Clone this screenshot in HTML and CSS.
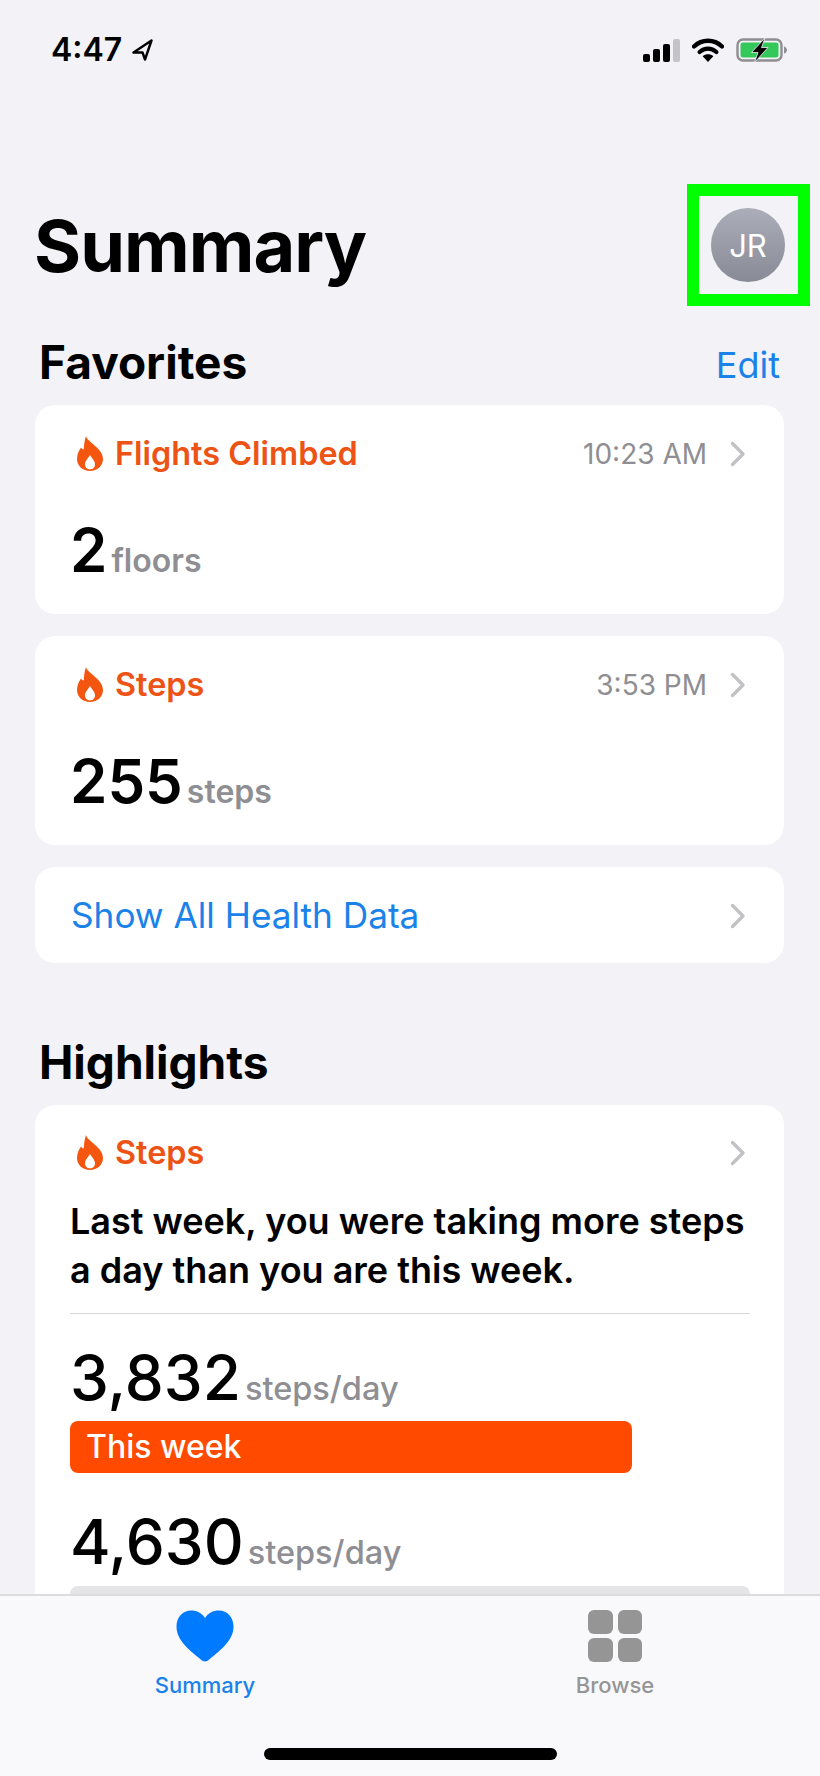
FILE: index.html
```html
<!DOCTYPE html>
<html lang="en">
<head>
  <meta charset="UTF-8" />
  <meta name="viewport" content="width=device-width, initial-scale=1.0"/>
  <title>Summary</title>
  <link rel="stylesheet" href="styles.css">
</head>
<body>

  <div class="phone">

    <!-- Status bar -->
    <div class="status-bar">
      <div class="status-left">
        <span class="clock">4:47</span>
        <svg class="location" viewBox="0 0 22 22"><path d="M20.500 1.500 2.500 13.500h9l2.500 7z" fill="none" stroke="#000" stroke-width="2.400" stroke-linejoin="round"/></svg>
      </div>
      <div class="status-right">
        <svg class="signal" viewBox="0 0 37 23">
          <rect x="0" y="15" width="7" height="8" rx="2" fill="#000"/>
          <rect x="10" y="10" width="7" height="13" rx="2" fill="#000"/>
          <rect x="20" y="5" width="7" height="18" rx="2" fill="#000"/>
          <rect x="30" y="0" width="7" height="23" rx="2" fill="#c4c4c6"/>
        </svg>
        <svg class="wifi" viewBox="0 0 32 24">
          <path d="M2 8.500C10 .8 22 .8 30 8.500" fill="none" stroke="#000" stroke-width="4.400" stroke-linecap="round"/>
          <path d="M7.600 14c5-4.600 11.800-4.600 16.800 0" fill="none" stroke="#000" stroke-width="4.200" stroke-linecap="round"/>
          <path d="M16 24l-5.300-5.700c3-2.600 7.600-2.600 10.600 0z" fill="#000"/>
        </svg>
        <svg class="battery" viewBox="0 0 51 24">
          <rect x="1.500" y="1.500" width="44" height="21" rx="5.500" fill="none" stroke="#8e8e93" stroke-width="2.400"/>
          <rect x="4.500" y="4.500" width="38" height="15" rx="2.500" fill="#34c759"/>
          <path d="M48 8.500c2 .5 3 2 3 3.500s-1 3-3 3.500z" fill="#8e8e93"/>
          <path d="M29 0 15.500 14.500H22L18.500 24.500 32 9.500h-6.500z" fill="#000" stroke="#f2f2f7" stroke-width=".8"/>
        </svg>
      </div>
    </div>

    <!-- Scrolling content -->
    <main class="content">
      <header class="page-header">
        <h1>Summary</h1>
        <div class="avatar-mark">
          <div class="avatar">JR</div>
        </div>
      </header>

      <div class="section-head">
        <h2>Favorites</h2>
        <span class="edit-link">Edit</span>
      </div>

      <section class="card fav-card">
        <div class="card-top">
          <svg class="flame" viewBox="0 0 26 35"><path fill-rule="evenodd" d="M9 0c1 6 17 12 17 23 0 7-5.800 12-13 12S0 30 0 23c0-4.500 1.800-8.500 4-11.500.5 1 1.500 1.800 2.800 2C7 9 7.500 4 9 0zm4 19c-2 3.500-5 6-5 9.300 0 3.200 2.300 5.200 5 5.200s5-2 5-5.200c0-3.300-3-5.800-5-9.300z" fill="#f4550f"/></svg>
          <span class="card-title">Flights Climbed</span>
          <span class="card-time">10:23 AM</span>
          <svg class="chevron" viewBox="0 0 16 26"><path d="M2.500 2.500 13 13 2.500 23.500" fill="none" stroke="#c2c2c6" stroke-width="3.400" stroke-linecap="round" stroke-linejoin="round"/></svg>
        </div>
        <div class="metric">
          <span class="metric-num">2</span><span class="metric-unit">floors</span>
        </div>
      </section>

      <section class="card fav-card">
        <div class="card-top">
          <svg class="flame" viewBox="0 0 26 35"><path fill-rule="evenodd" d="M9 0c1 6 17 12 17 23 0 7-5.800 12-13 12S0 30 0 23c0-4.500 1.800-8.500 4-11.500.5 1 1.500 1.800 2.800 2C7 9 7.500 4 9 0zm4 19c-2 3.500-5 6-5 9.300 0 3.200 2.300 5.200 5 5.200s5-2 5-5.200c0-3.300-3-5.800-5-9.300z" fill="#f4550f"/></svg>
          <span class="card-title">Steps</span>
          <span class="card-time">3:53 PM</span>
          <svg class="chevron" viewBox="0 0 16 26"><path d="M2.500 2.500 13 13 2.500 23.500" fill="none" stroke="#c2c2c6" stroke-width="3.400" stroke-linecap="round" stroke-linejoin="round"/></svg>
        </div>
        <div class="metric">
          <span class="metric-num">255</span><span class="metric-unit">steps</span>
        </div>
      </section>

      <section class="card all-data">
        <span class="all-data-text">Show All Health Data</span>
        <svg class="chevron" viewBox="0 0 16 26"><path d="M2.500 2.500 13 13 2.500 23.500" fill="none" stroke="#c2c2c6" stroke-width="3.400" stroke-linecap="round" stroke-linejoin="round"/></svg>
      </section>

      <h2 class="highlights-title">Highlights</h2>

      <section class="card highlight">
        <div class="card-top highlight-top">
          <svg class="flame" viewBox="0 0 26 35"><path fill-rule="evenodd" d="M9 0c1 6 17 12 17 23 0 7-5.800 12-13 12S0 30 0 23c0-4.500 1.800-8.500 4-11.500.5 1 1.500 1.800 2.800 2C7 9 7.500 4 9 0zm4 19c-2 3.500-5 6-5 9.300 0 3.200 2.300 5.200 5 5.200s5-2 5-5.200c0-3.300-3-5.800-5-9.300z" fill="#f4550f"/></svg>
          <span class="card-title">Steps</span>
          <svg class="chevron" viewBox="0 0 16 26"><path d="M2.500 2.500 13 13 2.500 23.500" fill="none" stroke="#c2c2c6" stroke-width="3.400" stroke-linecap="round" stroke-linejoin="round"/></svg>
        </div>
        <p class="highlight-text">Last week, you were taking more steps a day than you are this week.</p>
        <div class="divider"></div>
        <div class="metric compare">
          <span class="metric-num">3,832</span><span class="metric-unit">steps/day</span>
        </div>
        <div class="bar this-week">This week</div>
        <div class="metric compare second">
          <span class="metric-num">4,630</span><span class="metric-unit">steps/day</span>
        </div>
        <div class="bar last-week"></div>
      </section>
    </main>

    <!-- Tab bar -->
    <nav class="tab-bar">
      <div class="tabs">
        <div class="tab active">
          <svg class="tab-icon" viewBox="0 0 58 52"><path d="M29 51.500c-1.500 0-3-1-4.500-2.300C12 39 .5 30 .5 16.500.5 7 7 .5 15 .5c6 0 11 2.500 14 7.500 3-5 8-7.500 14-7.500 8 0 14.500 6.500 14.500 16 0 13.500-11.500 22.500-24 32.700-1.500 1.300-3 2.300-4.500 2.300z" fill="#007aff"/></svg>
          <span class="tab-label">Summary</span>
        </div>
        <div class="tab">
          <div class="grid-icon">
            <span></span><span></span><span></span><span></span>
          </div>
          <span class="tab-label">Browse</span>
        </div>
      </div>
      <div class="home-bar"></div>
    </nav>

  </div>

</body>
</html>
```

FILE: styles.css
```css
* {
  box-sizing: border-box;
}

body {
  margin: 0;
  background-color: #f2f2f7;
  font-family: 'Inter', 'Liberation Sans', sans-serif;
  color: #000;
}

.phone {
  width: 820px;
  height: 1776px;
  display: flex;
  flex-direction: column;
  overflow: hidden;
}

/* Status bar */
.status-bar {
  flex: none;
  height: 88px;
  padding: 36px 33px 0 51px;
  display: flex;
  justify-content: space-between;
  align-items: flex-start;
}

.status-left {
  display: flex;
  align-items: center;
  gap: 9px;
}

.clock {
  font-size: 32px;
  font-weight: 600;
  line-height: 28px;
}

.location {
  width: 22px;
  height: 22px;
}

.status-right {
  display: flex;
  align-items: center;
  gap: 12px;
  padding-top: 2px;
}

.signal {
  width: 37px;
  height: 23px;
}

.wifi {
  width: 32px;
  height: 24px;
}

.battery {
  width: 51px;
  height: 24px;
}

/* Main content */
.content {
  flex: 1;
  min-height: 0;
  overflow: hidden;
  padding: 0 36px 0 35px;
}

.page-header {
  height: 218px;
  padding-top: 96px;
  display: flex;
  justify-content: space-between;
  align-items: flex-start;
}

h1 {
  margin: 0 0 0 -1px;
  padding: 22px 0 0;
  font-size: 72px;
  font-weight: 700;
  line-height: 80px;
  letter-spacing: -1px;
}

.avatar-mark {
  width: 123px;
  height: 122px;
  border: 12px solid #0f0;
  padding: 12px 12px;
  margin-right: -26px;
}

.avatar {
  width: 74px;
  height: 74px;
  border-radius: 50%;
  background: linear-gradient(#abaeb8, #888b95);
  color: #fff;
  font-size: 31px;
  font-weight: 400;
  display: flex;
  align-items: center;
  justify-content: center;
}

.section-head {
  height: 99px;
  display: flex;
  justify-content: space-between;
  align-items: flex-start;
  padding: 29px 4px 0 4px;
}

h2 {
  margin: 0;
  font-size: 46px;
  font-weight: 700;
  line-height: 54px;
}

.edit-link {
  font-size: 36px;
  line-height: 54px;
  padding-top: 3px;
  color: #1a82e8;
}

.card {
  background-color: #fff;
  border-radius: 20px;
}

.fav-card {
  height: 209px;
  margin-bottom: 22px;
  padding: 29px 38px 0 35px;
}

.card-top {
  display: flex;
  align-items: center;
  height: 38px;
}

.flame {
  width: 26px;
  height: 35px;
  margin: 0 12px 0 7px;
}

.card-title {
  font-size: 32.4px;
  font-weight: 600;
  color: #ec5314;
  flex: 1;
}

.card-time {
  font-size: 28px;
  color: #8e8e93;
  margin: 2px 23px 0 0;
}

.chevron {
  width: 16px;
  height: 26px;
  flex: none;
  margin-top: 2px;
}

.metric {
  display: flex;
  align-items: baseline;
  margin-top: 43px;
}

.metric-num {
  font-size: 60px;
  font-weight: 600;
  line-height: 70px;
}

.metric-unit {
  font-size: 32px;
  font-weight: 600;
  color: #8e8e93;
  margin-left: 4px;
}

.all-data {
  height: 96px;
  display: flex;
  justify-content: space-between;
  align-items: center;
  padding: 0 38px 0 36px;
}

.all-data-text {
  font-size: 35.2px;
  color: #1a82e8;
}

.highlights-title {
  padding-left: 4px;
  margin-top: 72px;
  height: 70px;
}

.highlight {
  padding: 28px 38px 0 35px;
  height: 600px;
}

.highlight-text {
  margin: 26px -4px 0 0;
  font-size: 36px;
  font-weight: 600;
  line-height: 49px;
}

.divider {
  height: 1px;
  background-color: #d6d6d8;
  margin: 18px -4px 0 0;
}

.compare {
  margin-top: 29px;
}

.compare .metric-num {
  font-size: 62px;
  font-weight: 500;
}

.compare .metric-unit {
  font-size: 32.5px;
  font-weight: 500;
}

.compare.second {
  margin-top: 34px;
}

.bar {
  height: 52px;
  border-radius: 8px;
  margin-top: 8px;
}

.this-week {
  width: 562px;
  background-color: #ff4a00;
  color: #fff;
  font-size: 32px;
  font-weight: 500;
  line-height: 52px;
  padding-left: 16px;
}

.last-week {
  margin: 9px -4px 0 0;
  background-color: #e5e5e7;
}

/* Tab bar */
.tab-bar {
  flex: none;
  height: 182px;
  background-color: #f9f9fb;
  border-top: 2px solid #dcdcde;
}

.tabs {
  display: grid;
  grid-template-columns: 1fr 1fr;
  padding-top: 14px;
}

.tab {
  display: flex;
  flex-direction: column;
  align-items: center;
  color: #959595;
}

.tab.active {
  color: #1a82e8;
}

.tab-icon {
  width: 58px;
  height: 52px;
}

.grid-icon {
  width: 54px;
  height: 52px;
  display: grid;
  grid-template-columns: 1fr 1fr;
  grid-template-rows: 1fr 1fr;
  gap: 4px 5px;
}

.grid-icon span {
  background-color: #959595;
  border-radius: 6px;
}

.tab-label {
  margin-top: 9px;
  font-size: 22px;
  font-weight: 500;
  line-height: 28px;
}

.home-bar {
  width: 293px;
  height: 12px;
  border-radius: 6px;
  background-color: #000;
  margin: 49px auto 0;
}
```
